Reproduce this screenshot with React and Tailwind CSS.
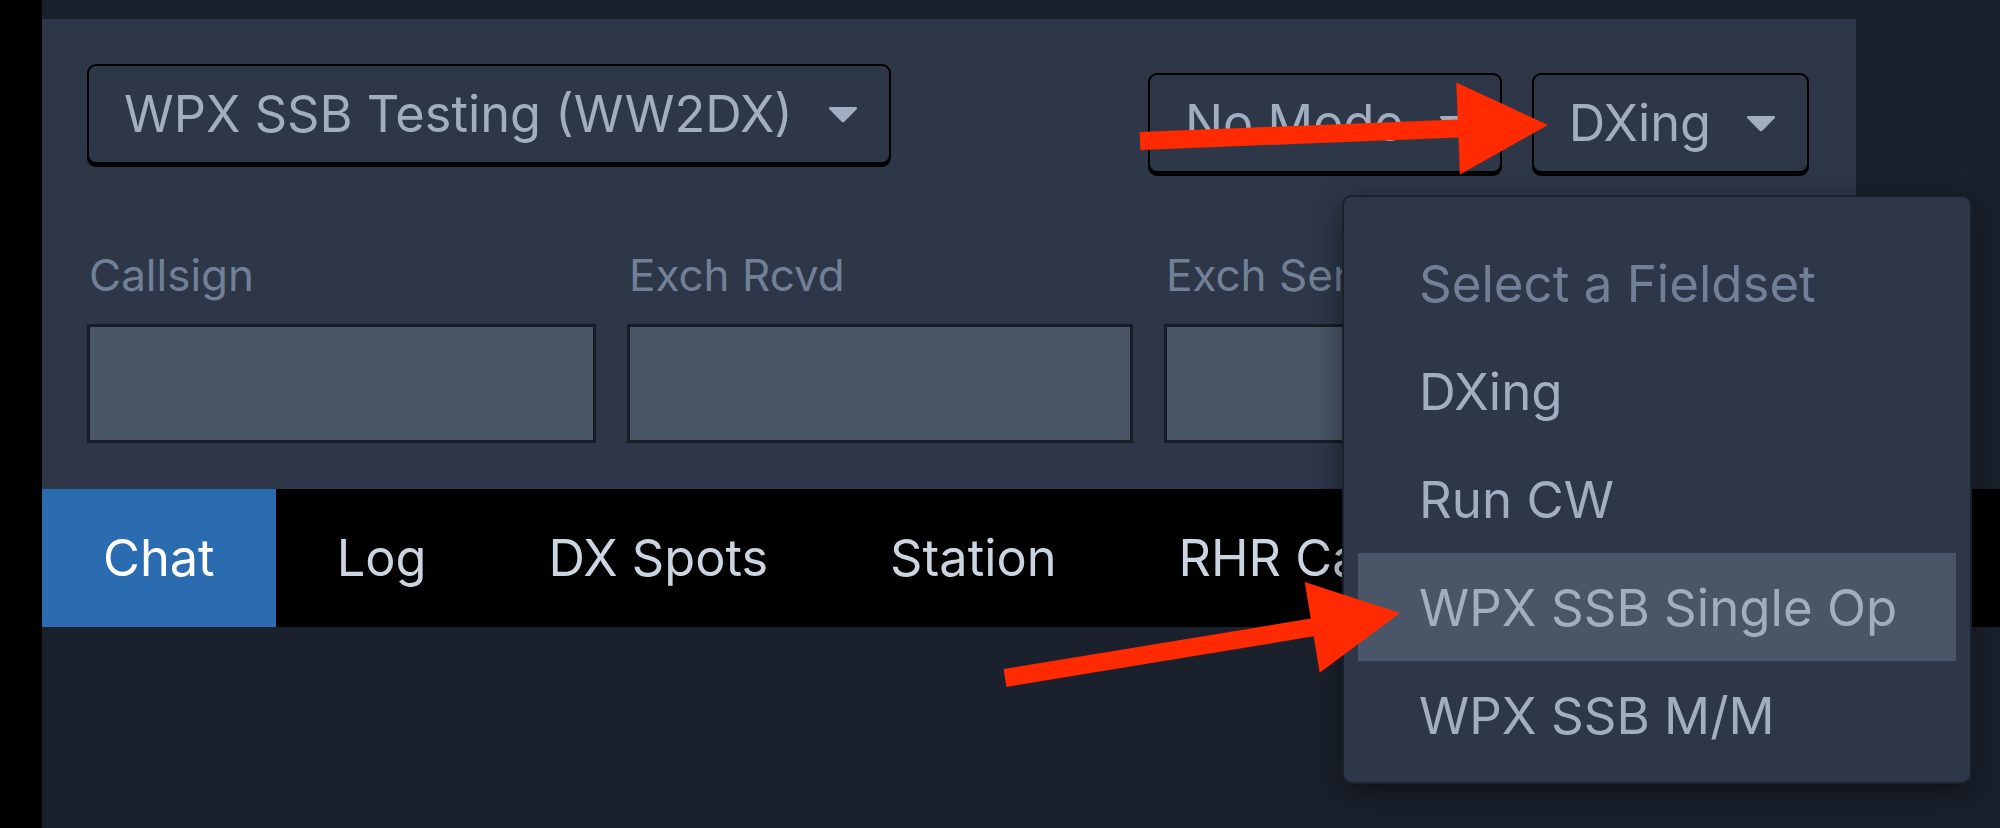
import React from 'react';

const Chevron = () => (
  <svg width="30" height="17" viewBox="0 0 30 17" className="shrink-0">
    <path d="M2.5 1 H27.5 Q30 1 28.6 3.2 L16.6 15.6 Q15 17.2 13.4 15.6 L1.4 3.2 Q0 1 2.5 1 Z" fill="#a0aec0" />
  </svg>
);

const SelectBox = ({ label, className = '' }) => (
  <div
    className={`flex items-center gap-[35px] h-[100px] pl-[35px] pr-[31px] border-2 border-black rounded-[9px] bg-[#2d3748] shadow-[0_3px_0_#000] text-[50.5px] text-[#a0aec0] leading-none ${className}`}
  >
    <span>{label}</span>
    <Chevron />
  </div>
);

const fields = ['Callsign', 'Exch Rcvd', 'Exch Sent'];
const tabs = ['Chat', 'Log', 'DX Spots', 'Station', 'RHR Calls'];
const fieldsets = ['DXing', 'Run CW', 'WPX SSB Single Op', 'WPX SSB M/M'];

export default function App() {
  return (
    <div className="w-[2000px] h-[828px] flex bg-black overflow-hidden font-['Inter','Liberation_Sans',sans-serif]">
      <div className="w-[42px] shrink-0 bg-black" />

      <div className="relative flex-1 flex flex-col bg-[#1a202c]">
        <div className="h-[19px] shrink-0" />

        {/* top panel */}
        <div className="w-[1814px] h-[470px] shrink-0 bg-[#2d3748] pl-[45px] pr-[47px] pt-[45px]">
          <div className="flex items-start">
            <SelectBox label="WPX SSB Testing (WW2DX)" />
            <div className="ml-auto mt-[9px] flex gap-[30px]">
              <SelectBox label="No Mode" />
              <SelectBox label="DXing" />
            </div>
          </div>

          <div className="mt-[80px] grid grid-cols-[509px_506px_509px] gap-x-[31px]">
            {fields.map(f => (
              <div key={f} className="flex flex-col">
                <label className="h-[71px] pl-[2px] text-[44px] leading-none text-[#718096]">{f}</label>
                <div className="h-[119px] border-[3px] border-[#171c26] bg-[#4a5568]" />
              </div>
            ))}
          </div>
        </div>

        {/* tabs */}
        <div className="h-[138px] shrink-0 flex bg-black text-[50.5px] leading-none">
          {tabs.map((t, i) => (
            <div
              key={t}
              className={`flex items-center px-[61px] ${i === 0 ? 'bg-[#2b6cb0] text-white' : 'text-[#cbd5e0]'}`}
            >
              {t}
            </div>
          ))}
        </div>

        <div className="flex-1" />

        {/* fieldset menu */}
        <div className="absolute left-[1300px] top-[195px] w-[630px] rounded-[10px] border-2 border-[#1a202c] bg-[#2d3748] pt-[32px] pb-[13px] px-[14px] shadow-[0_10px_30px_rgba(0,0,0,0.45)] text-[51px] leading-none">
          <div className="h-[108px] flex items-center pl-[61px] text-[#718096]">Select a Fieldset</div>
          {fieldsets.map((f, i) => (
            <div
              key={f}
              className={`h-[108px] flex items-center pl-[61px] text-[#a0aec0] ${i === 2 ? 'bg-[#4a5568]' : ''}`}
            >
              {f}
            </div>
          ))}
        </div>
      </div>

      {/* annotation arrows */}
      <svg className="absolute left-0 top-0 pointer-events-none" width="2000" height="828" viewBox="0 0 2000 828">
        <polygon
          fill="#ff2a00"
          points="1140.35,149.99 1139.65,132.01 1457.72,119.54 1456.27,82.56 1548,125 1459.87,174.49 1458.42,137.52"
        />
        <polygon
          fill="#ff2a00"
          points="1006.46,686.88 1003.54,669.12 1310.74,618.57 1304.73,582.06 1400,613 1319.67,672.84 1313.66,636.33"
        />
      </svg>
    </div>
  );
}
